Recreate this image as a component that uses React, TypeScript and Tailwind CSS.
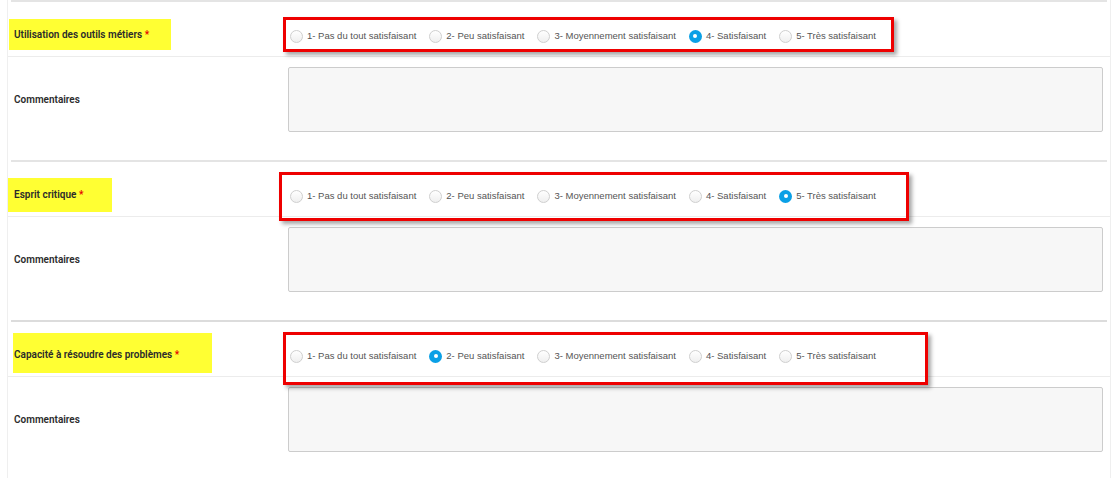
import React from 'react';

const OPTIONS = [
  '1- Pas du tout satisfaisant',
  '2- Peu satisfaisant',
  '3- Moyennement satisfaisant',
  '4- Satisfaisant',
  '5- Très satisfaisant',
];

interface Criterion {
  label: string;
  selected: number;
  highlight: string;
  box: string;
  thick?: boolean;
}

const CRITERIA: Criterion[] = [
  {
    label: 'Utilisation des outils métiers',
    selected: 3,
    highlight: 'left-[1px] top-[19px] w-[162px] h-[31px]',
    box: 'left-[275px] top-[17px] w-[611px] h-[35px]',
  },
  {
    label: 'Esprit critique',
    selected: 4,
    highlight: 'left-0 top-[18px] w-[104px] h-[34px]',
    box: 'left-[271px] top-[12px] w-[630px] h-[49px]',
  },
  {
    label: 'Capacité à résoudre des problèmes',
    selected: 1,
    highlight: 'left-[5px] top-[13px] w-[199px] h-[40px]',
    box: 'left-[275px] top-[12px] w-[645px] h-[53px]',
    thick: true,
  },
];

function Radio({ checked, label }: { checked: boolean; label: string }) {
  return (
    <label className="flex items-center gap-[4px] cursor-pointer">
      {checked ? (
        <span className="w-[13px] h-[13px] rounded-full bg-[#0aa0e6] flex items-center justify-center">
          <span className="w-[4px] h-[4px] rounded-full bg-white" />
        </span>
      ) : (
        <span className="w-[13px] h-[13px] rounded-full border border-[#cfcfcf] bg-gradient-to-b from-white to-[#efefef]" />
      )}
      <span className="text-[9.5px] leading-[14px] text-[#555]">{label}</span>
    </label>
  );
}

function Section({ c }: { c: Criterion }) {
  return (
    <div className="relative h-[160px]">
      {/* section divider */}
      <div className={`mx-[3px] ${c.thick ? 'h-[2px] bg-[#dcdcdc]' : 'h-[2px] bg-[#e4e4e4]'}`} />

      {/* annotations */}
      <div className={`absolute bg-[#ffff33] ${c.highlight}`} />
      <div
        className={`absolute z-20 border-[3px] border-[#ee0000] shadow-[3px_3px_4px_rgba(0,0,0,0.35)] pointer-events-none ${c.box}`}
      />

      {/* rating row */}
      <div className="relative flex h-[55px] border-b border-[#ececec]">
        <div className="relative z-10 w-[280px] pl-[6px] pt-[26px] text-[10px] leading-[14px] font-semibold text-[#2b2b2b] font-['Roboto',sans-serif]">
          {c.label} <span className="text-[#e50000]">*</span>
        </div>
        <div className="flex items-start gap-[13px] pl-[2px] pt-[27px] font-['Liberation_Sans',Arial,sans-serif]">
          {OPTIONS.map((o, i) => (
            <Radio key={o} label={o} checked={i === c.selected} />
          ))}
        </div>
      </div>

      {/* comments row */}
      <div className="flex items-center mt-[10px]">
        <div className="w-[280px] pl-[6px] text-[10px] leading-[14px] font-semibold text-[#2b2b2b] font-['Roboto',sans-serif]">
          Commentaires
        </div>
        <textarea className="flex-1 mr-[7px] h-[65px] rounded-[2px] border border-[#cccccc] bg-[#f7f7f7] resize-none outline-none" />
      </div>
    </div>
  );
}

export default function App() {
  return (
    <div className="w-[1114px] h-[478px] bg-white overflow-hidden">
      <div className="ml-[7px] w-[1104px] h-full border-l border-r border-[#efefef]">
        {CRITERIA.map((c) => (
          <Section key={c.label} c={c} />
        ))}
      </div>
    </div>
  );
}
